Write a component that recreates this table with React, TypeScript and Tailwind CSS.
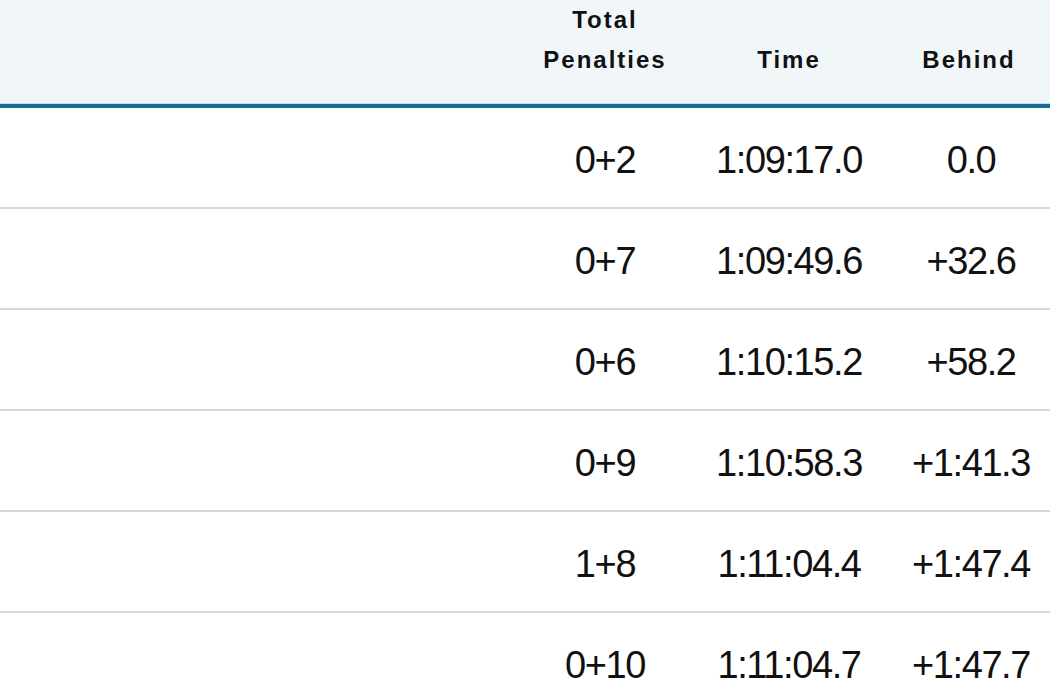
const rows = [
  { pen: "0+2", time: "1:09:17.0", behind: "0.0" },
  { pen: "0+7", time: "1:09:49.6", behind: "+32.6" },
  { pen: "0+6", time: "1:10:15.2", behind: "+58.2" },
  { pen: "0+9", time: "1:10:58.3", behind: "+1:41.3" },
  { pen: "1+8", time: "1:11:04.4", behind: "+1:47.4" },
  { pen: "0+10", time: "1:11:04.7", behind: "+1:47.7" },
];

export default function App() {
  return (
    <div className="w-[1050px] h-[700px] overflow-hidden bg-white text-[#111] font-['Liberation_Sans',Arial,sans-serif]">
      <div className="grid grid-cols-[1fr_170px_198px_162px] h-[103px] bg-[#f1f7f9] items-end pb-[26px] text-[24px] font-bold tracking-[2px] leading-[40px] text-center">
        <div />
        <div>
          Total
          <br />
          Penalties
        </div>
        <div>Time</div>
        <div>Behind</div>
      </div>
      <div className="h-[1px] bg-[#b9e2ee]" />
      <div className="h-[4px] bg-[#1c6b93]" />
      {rows.map((r) => (
        <div
          key={r.time}
          className="grid grid-cols-[1fr_170px_198px_162px] h-[101px] items-center pt-[6px] border-b-2 border-[#d8d8d8] text-[38px] tracking-[-1.4px] text-center"
        >
          <div />
          <div>{r.pen}</div>
          <div>{r.time}</div>
          <div className="pl-[4px]">{r.behind}</div>
        </div>
      ))}
    </div>
  );
}
